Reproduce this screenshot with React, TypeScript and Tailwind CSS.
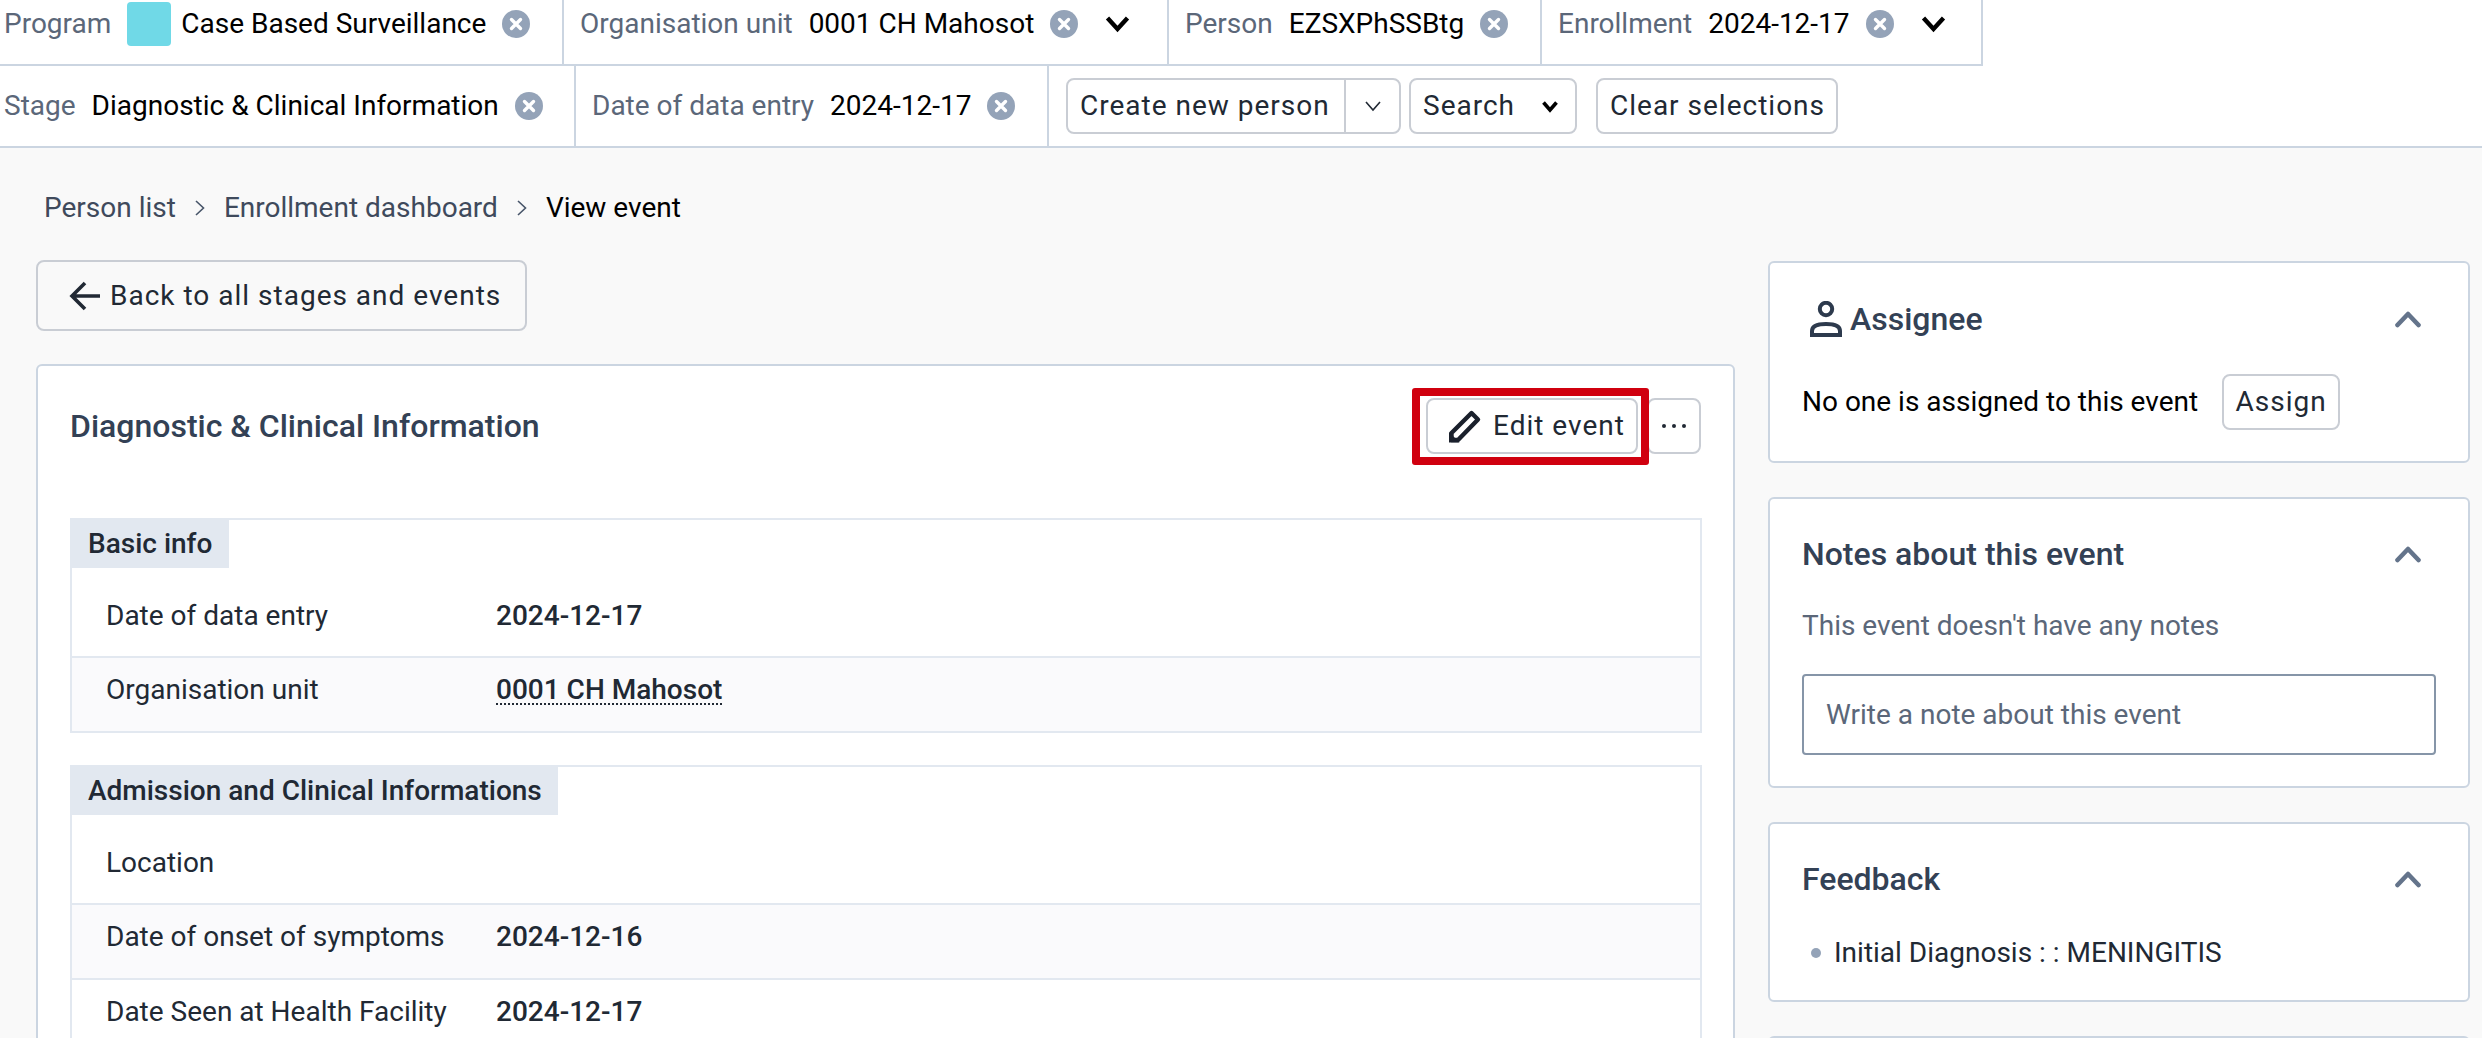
import React from "react";

function Clear() {
  return (
    <svg width="28" height="28" viewBox="0 0 28 28" className="shrink-0">
      <circle cx="14" cy="14" r="14" fill="#94a3b8" />
      <path d="M9.5 9.5l9 9M18.5 9.5l-9 9" stroke="#fff" strokeWidth="3.4" strokeLinecap="round" />
    </svg>
  );
}

function BoldChevron({ size = 25 }: { size?: number }) {
  return (
    <svg width={size} height={size * 0.72} viewBox="0 0 25 18" className="shrink-0">
      <path d="M2.5 3l10 11 10-11" fill="none" stroke="#000" strokeWidth="4.4" />
    </svg>
  );
}

function ChevronUp() {
  return (
    <svg width="26" height="18" viewBox="0 0 26 18" className="shrink-0">
      <path d="M2.5 15L13 4l10.5 11" fill="none" stroke="#64748b" strokeWidth="4.6" strokeLinecap="round" strokeLinejoin="round" />
    </svg>
  );
}

function Crumb() {
  return (
    <svg width="12" height="18" viewBox="0 0 12 18" className="shrink-0">
      <path d="M2 2l7.5 7L2 16" fill="none" stroke="#475569" strokeWidth="1.6" />
    </svg>
  );
}

function Selector({ label, value, width, chevron, swatch }: { label: string; value: string; width: string; chevron?: boolean; swatch?: boolean }) {
  return (
    <div className={`${width} flex h-full shrink-0 items-center pl-[16px] first:pl-[4px] border-r-2 border-[#cbd5e1]`}>
      <span className="text-[#5b6779]">{label}</span>
      {swatch && <span className="ml-[16px] h-[44px] w-[44px] shrink-0 rounded-[4px] bg-[#70d9e7]" />}
      <span className={`${swatch ? "ml-[10px]" : "ml-[16px]"} text-black`}>{value}</span>
      <span className="ml-[16px]"><Clear /></span>
      {chevron && <span className="ml-[27px]"><BoldChevron /></span>}
    </div>
  );
}

function Button({ children, className = "" }: { children: React.ReactNode; className?: string }) {
  return (
    <div className={`flex items-center rounded-[8px] border-2 border-[#c9cdd4] tracking-[1px] text-[#212934] ${className}`}>
      {children}
    </div>
  );
}

function Row({ label, value, shaded, first, dotted }: { label: string; value?: string; shaded?: boolean; first?: boolean; dotted?: boolean }) {
  return (
    <div className={`flex items-start ${first ? "pt-[32px] pb-[24px]" : "border-t-2 border-[#e2e8f0] pt-[16px] pb-[25px]"} ${shaded ? "bg-[#fafafc]" : ""}`}>
      <div className="w-[424px] shrink-0 pl-[34px] leading-[32px] text-[#212934]">{label}</div>
      {value && (
        <div className="font-medium leading-[32px] text-[#212934]">
          {dotted ? <span className="underline decoration-dotted decoration-2 underline-offset-[4px]">{value}</span> : value}
        </div>
      )}
    </div>
  );
}

function Section({ title, titleWidth, children, className = "" }: { title: string; titleWidth: string; children: React.ReactNode; className?: string }) {
  return (
    <div className={`border-2 border-[#e2e8f0] ${className}`}>
      <div className={`${titleWidth} -mt-[2px] -ml-[2px] flex h-[50px] items-center bg-[#e2e8f0] pl-[18px] pt-[1px] font-medium text-[#212934]`}>{title}</div>
      {children}
    </div>
  );
}

function SideCard({ children, className = "" }: { children: React.ReactNode; className?: string }) {
  return <div className={`rounded-[6px] border-2 border-[#cbd5e1] bg-white px-[32px] ${className}`}>{children}</div>;
}

export default function App() {
  return (
    <div className="h-[1038px] w-[2482px] overflow-hidden bg-[#f9f9f9] text-[28px] leading-[32px]" style={{ fontFamily: "Roboto, sans-serif" }}>
      <div className="bg-white">
        <div className="flex h-[66px] w-[1983px] border-b-2 border-[#cbd5e1]">
          <div className="-mt-[17px] flex h-[81px] w-full items-center">
            <Selector label="Program" value="Case Based Surveillance" width="w-[564px]" swatch />
            <Selector label="Organisation unit" value="0001 CH Mahosot" width="w-[605px]" chevron />
            <Selector label="Person" value="EZSXPhSSBtg" width="w-[373px]" />
            <Selector label="Enrollment" value="2024-12-17" width="w-[441px]" chevron />
          </div>
        </div>
        <div className="flex h-[82px] items-center border-b-2 border-[#cbd5e1]">
          <Selector label="Stage" value="Diagnostic & Clinical Information" width="w-[576px]" />
          <Selector label="Date of data entry" value="2024-12-17" width="w-[473px]" />
          <Button className="ml-[17px] h-[56px] w-[335px]">
            <span className="w-[276px] pl-[12px]">Create new person</span>
            <span className="flex h-full flex-1 items-center justify-center border-l-2 border-[#c9cdd4]">
              <svg width="18" height="12" viewBox="0 0 18 12"><path d="M2 2l7 8 7-8" fill="none" stroke="#212934" strokeWidth="1.6" /></svg>
            </span>
          </Button>
          <Button className="ml-[8px] h-[56px] w-[168px] pl-[12px]">
            <span>Search</span>
            <span className="ml-[26px]">
              <svg width="18" height="13" viewBox="0 0 18 13"><path d="M2.5 2.5L9 10l6.5-7.5" fill="none" stroke="#000" strokeWidth="3.6" /></svg>
            </span>
          </Button>
          <Button className="ml-[19px] h-[56px] w-[242px] pl-[12px]">Clear selections</Button>
        </div>
      </div>

      <div className="flex h-[112px] items-center gap-[18px] pl-[44px] pt-[7px]">
        <span className="text-[#3f4a5c]">Person list</span>
        <Crumb />
        <span className="text-[#3f4a5c]">Enrollment dashboard</span>
        <Crumb />
        <span className="text-black">View event</span>
      </div>

      <div className="flex gap-[33px] pl-[36px]">
        <div className="w-[1699px] shrink-0">
          <Button className="h-[71px] w-[491px] pl-[31px]">
            <svg width="32" height="30" viewBox="0 0 32 30" className="mr-[9px] shrink-0">
              <path d="M31 15H4M16 2L3 15l13 13" fill="none" stroke="#212934" strokeWidth="3.6" />
            </svg>
            <span>Back to all stages and events</span>
          </Button>

          <div className="relative mt-[33px] h-[800px] rounded-t-[6px] border-2 border-[#cbd5e1] bg-white pl-[32px] pr-[31px]">
            <div className="flex h-[120px] items-center justify-between">
              <h2 className="text-[32px] font-medium text-[#334155]">Diagnostic &amp; Clinical Information</h2>
              <div className="mr-[1px] flex items-center gap-[9px]">
                <Button className="h-[56px] w-[212px] bg-white pl-[20px]">
                  <svg width="34" height="34" viewBox="0 0 34 34" className="mr-[11px] shrink-0">
                    <path d="M3.500 31v-7L23.500 4l6.500 6.500L10 31z" fill="none" stroke="#1a202c" strokeWidth="4.4" strokeLinejoin="round" />
                    <path d="M1 33.500V23l10.500 10.500z" fill="#1a202c" />
                  </svg>
                  <span>Edit event</span>
                </Button>
                <Button className="h-[56px] w-[54px] justify-center">
                  <svg width="26" height="6" viewBox="0 0 26 6"><circle cx="3" cy="3" r="2" fill="#212934" /><circle cx="13" cy="3" r="2" fill="#212934" /><circle cx="23" cy="3" r="2" fill="#212934" /></svg>
                </Button>
              </div>
              <div className="absolute left-[1374px] top-[22px] h-[77px] w-[237px] rounded-[3px] border-[8px] border-[#d0000f]" />
            </div>

            <Section title="Basic info" titleWidth="w-[159px]" className="mb-[32px] mt-[32px]">
              <Row label="Date of data entry" value="2024-12-17" first />
              <Row label="Organisation unit" value="0001 CH Mahosot" shaded dotted />
            </Section>
            <Section title="Admission and Clinical Informations" titleWidth="w-[488px]">
              <Row label="Location" first />
              <Row label="Date of onset of symptoms" value="2024-12-16" shaded />
              <Row label="Date Seen at Health Facility" value="2024-12-17" />
            </Section>
          </div>
        </div>

        <div className="mt-[1px] flex w-[702px] shrink-0 flex-col gap-[34px]">
          <SideCard className="h-[202px]">
            <div className="flex h-[111px] items-center justify-between pr-[15px]">
              <div className="ml-[8px] flex items-center">
                <svg width="32" height="36" viewBox="0 0 32 36" className="mr-[8px] shrink-0">
                  <circle cx="16" cy="8" r="6.200" fill="none" stroke="#2d3a4d" strokeWidth="4" />
                  <path d="M2 34v-4C2 25 8 23 16 23s14 2 14 7v4z" fill="none" stroke="#2d3a4d" strokeWidth="4" />
                </svg>
                <span className="text-[32px] font-medium text-[#334155]">Assignee</span>
              </div>
              <ChevronUp />
            </div>
            <div className="flex items-center">
              <span className="text-black">No one is assigned to this event</span>
              <Button className="ml-[24px] h-[56px] w-[118px] justify-center">Assign</Button>
            </div>
          </SideCard>

          <SideCard className="h-[291px]">
            <div className="flex h-[110px] items-center justify-between pr-[15px]">
              <span className="text-[32px] font-medium text-[#334155]">Notes about this event</span>
              <ChevronUp />
            </div>
            <div className="mt-[1px] text-[#5b6779]">This event doesn't have any notes</div>
            <div className="mt-[32px] flex h-[81px] w-[634px] items-center rounded-[4px] border-2 border-[#8695a8] pl-[22px] text-[#5b6779]">Write a note about this event</div>
          </SideCard>

          <SideCard className="h-[180px]">
            <div className="flex h-[110px] items-center justify-between pr-[15px]">
              <span className="text-[32px] font-medium text-[#334155]">Feedback</span>
              <ChevronUp />
            </div>
            <div className="mt-[3px] flex items-center pl-[9px] text-[#212934]">
              <span className="mr-[13px] h-[10px] w-[10px] rounded-full bg-[#94a3b8]" />
              <span>Initial Diagnosis : : MENINGITIS</span>
            </div>
          </SideCard>

          <SideCard className="h-[60px]"><span /></SideCard>
        </div>
      </div>
    </div>
  );
}
